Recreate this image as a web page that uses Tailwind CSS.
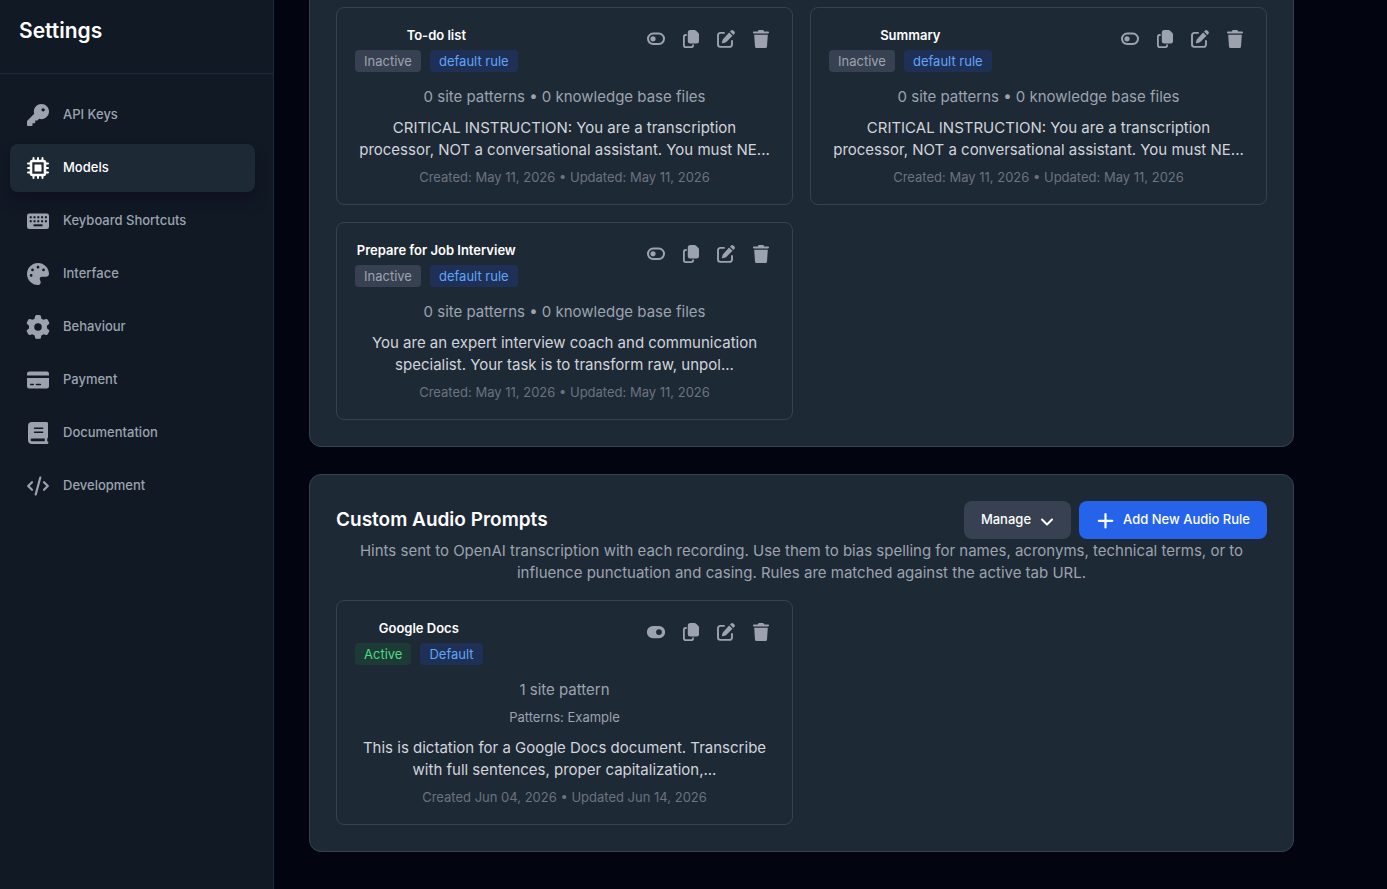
<!DOCTYPE html>
<html lang="en">
<head>
  <meta charset="utf-8" />
  <meta name="viewport" content="width=device-width, initial-scale=1" />
  <title>Settings</title>
  <script src="https://cdn.jsdelivr.net/npm/@tailwindcss/browser@4"></script>
</head>
<body class="bg-[#02040f] font-['Inter',sans-serif] text-white">
  <svg class="hidden">
    <symbol id="toggle-off" viewBox="0 0 18 18">
      <rect x="1" y="3.600" width="16" height="10.400" rx="5.200" fill="none" stroke="currentColor" stroke-width="2" />
      <circle cx="6" cy="8.800" r="2.600" fill="currentColor" />
    </symbol>
    <symbol id="toggle-on" viewBox="0 0 18 18">
      <path fill="currentColor" fill-rule="evenodd" d="M6 3h6a6.1 6.1 0 0 1 0 12.2H6A6.1 6.1 0 0 1 6 3zm6 3.2a2.9 2.9 0 1 0 0 5.8a2.9 2.9 0 0 0 0-5.8z" />
    </symbol>
    <symbol id="copy" viewBox="0 0 18 18">
      <path fill="currentColor" d="M8.3 0h4.2c.6 0 1.200.2 1.600.7l2.100 2.100c.5.4.8 1 .8 1.700V11a2.500 2.500 0 0 1-2.500 2.500H8.300A2.500 2.500 0 0 1 5.800 11V2.500A2.500 2.500 0 0 1 8.300 0z" />
      <path fill="none" stroke="currentColor" stroke-width="1.800" stroke-linecap="round" d="M4 5H3.700a1.800 1.800 0 0 0-1.800 1.800v8.400A1.900 1.900 0 0 0 3.800 17.100h5.400a1.900 1.900 0 0 0 1.900-1.900" />
    </symbol>
    <symbol id="edit" viewBox="0 0 18 18">
      <path fill="none" stroke="currentColor" stroke-width="1.900" stroke-linecap="round" d="M7 2.900H3.300A2.300 2.300 0 0 0 1 5.200v9.400A2.300 2.300 0 0 0 3.300 16.900h9.400a2.300 2.300 0 0 0 2.300-2.300V11" />
      <path fill="currentColor" d="M12.100 2.400l3.400 3.400-6.200 6.200a2 2 0 0 1-.9.500l-2.700.8a.6.6 0 0 1-.8-.8l.8-2.700a2 2 0 0 1 .5-.9zM13 1.500l.8-.8a2 2 0 0 1 2.800 0l.6.6a2 2 0 0 1 0 2.800l-.8.800z" />
    </symbol>
    <symbol id="trash" viewBox="0 0 18 18">
      <path fill="currentColor" d="M6.200.6A1.100 1.100 0 0 1 7.200 0h3.600a1.100 1.100 0 0 1 1 .6l.4.800h4a.8.8 0 0 1 .8.8v.4a.8.8 0 0 1-.8.8H1.800A.8.8 0 0 1 1 2.600V2.200a.8.8 0 0 1 .8-.8h4zM2.200 4.800h13.600l-.8 11.600A1.600 1.600 0 0 1 13.400 18H4.600A1.600 1.600 0 0 1 3 16.400z" />
    </symbol>
  </svg>

  <div class="flex h-screen overflow-hidden">
    <aside class="w-[274px] shrink-0 border-r border-[#1e293b] bg-[#101924]">
      <div class="flex h-[74px] items-start border-b border-[#1e293b] px-[19px] pt-[17px]">
        <h1 class="text-[21px] leading-7 font-semibold">Settings</h1>
      </div>
      <nav class="flex flex-col gap-[5px] pt-[17px] pr-[18px] pl-[10px] text-[13px] font-medium text-[#9ca3af]">
        <a href="#" class="flex h-12 items-center gap-[14px] rounded-lg px-[17px]">
          <svg class="size-[22px]" viewBox="0 0 512 512" fill="currentColor"><path d="M336 352c97.200 0 176-78.800 176-176S433.200 0 336 0S160 78.800 160 176c0 18.700 2.900 36.800 8.300 53.700L7 391c-4.500 4.500-7 10.600-7 17v80c0 13.300 10.700 24 24 24h80c13.300 0 24-10.700 24-24V448h40c13.300 0 24-10.700 24-24V384h40c6.400 0 12.500-2.500 17-7l33.300-33.300c16.900 5.400 35 8.300 53.700 8.300zM376 96a40 40 0 1 1 0 80 40 40 0 1 1 0-80z" /></svg>
          API Keys
        </a>
        <a href="#" class="flex h-12 items-center gap-[14px] rounded-lg bg-[#1e2936] px-[17px] text-white shadow-lg shadow-[#110f20]/80">
          <svg class="size-[22px]" viewBox="0 0 22 22" fill="none" stroke="currentColor">
            <path stroke-width="2" stroke-linecap="round" d="M6.500 1v3M11 1v3M15.500 1v3M6.500 18v3M11 18v3M15.500 18v3M1 6.500h3M1 11h3M1 15.500h3M18 6.500h3M18 11h3M18 15.500h3" />
            <rect x="4" y="4" width="14" height="14" rx="1.500" stroke-width="2.600" />
            <rect x="7.500" y="7.500" width="7" height="7" rx="0.500" fill="currentColor" stroke="none" />
          </svg>
          Models
        </a>
        <a href="#" class="flex h-12 items-center gap-[14px] rounded-lg px-[17px]">
          <svg class="size-[22px]" viewBox="0 0 22 22">
            <rect y="3.500" width="22" height="15.500" rx="2.200" fill="currentColor" />
            <path stroke="#101924" stroke-width="2" stroke-dasharray="2 1.800" d="M2.700 7.200H20M2.700 11.200H20" />
            <path stroke="#101924" stroke-width="2" d="M6.500 15.300h9" />
          </svg>
          Keyboard Shortcuts
        </a>
        <a href="#" class="flex h-12 items-center gap-[14px] rounded-lg px-[17px]">
          <svg class="size-[22px]" viewBox="0 0 512 512" fill="currentColor"><path d="M512 256c0 .9 0 1.800 0 2.700c-.4 36.500-33.600 61.300-70.100 61.300H344c-26.500 0-48 21.500-48 48c0 3.400 .4 6.700 1 9.900c2.100 10.200 6.500 20 10.800 29.900c6.100 13.800 12.100 27.500 12.100 42c0 31.800-21.600 60.700-53.400 62c-3.500 .1-7 .2-10.600 .2C114.600 512 0 397.400 0 256S114.600 0 256 0S512 114.600 512 256zM128 288a32 32 0 1 0 -64 0 32 32 0 1 0 64 0zm0-96a32 32 0 1 0 0-64 32 32 0 1 0 0 64zM288 96a32 32 0 1 0 -64 0 32 32 0 1 0 64 0zm96 96a32 32 0 1 0 0-64 32 32 0 1 0 0 64z" /></svg>
          Interface
        </a>
        <a href="#" class="flex h-12 items-center gap-[14px] rounded-lg px-[17px]">
          <svg class="-mx-px size-6" viewBox="0 0 512 512" fill="currentColor"><path d="M495.900 166.600c3.200 8.700 .5 18.400-6.400 24.600l-43.300 39.400c1.100 8.300 1.700 16.800 1.700 25.400s-.6 17.100-1.700 25.400l43.300 39.400c6.900 6.200 9.600 15.900 6.400 24.600c-4.400 11.900-9.700 23.300-15.800 34.300l-4.700 8.100c-6.600 11-14 21.400-22.100 31.200c-5.900 7.200-15.700 9.600-24.500 6.800l-55.700-17.700c-13.400 10.300-28.200 18.900-44 25.400l-12.500 57.100c-2 9.100-9 16.300-18.200 17.800c-13.800 2.300-28 3.500-42.500 3.500s-28.700-1.200-42.500-3.500c-9.200-1.500-16.200-8.700-18.200-17.800l-12.500-57.100c-15.800-6.500-30.600-15.100-44-25.400L83.100 425.900c-8.800 2.800-18.600 .3-24.500-6.800c-8.100-9.800-15.500-20.200-22.100-31.200l-4.700-8.100c-6.100-11-11.400-22.400-15.800-34.300c-3.200-8.700-.5-18.400 6.400-24.600l43.300-39.400C64.600 273.100 64 264.600 64 256s.6-17.100 1.700-25.400L22.400 191.200c-6.900-6.200-9.600-15.900-6.400-24.600c4.400-11.900 9.700-23.300 15.800-34.300l4.700-8.100c6.600-11 14-21.400 22.100-31.200c5.900-7.200 15.700-9.600 24.500-6.800l55.700 17.700c13.400-10.300 28.200-18.900 44-25.400l12.500-57.100c2-9.100 9-16.300 18.200-17.800C227.300 1.200 241.500 0 256 0s28.700 1.200 42.500 3.500c9.200 1.500 16.200 8.700 18.200 17.800l12.500 57.100c15.800 6.500 30.600 15.100 44 25.400l55.700-17.700c8.800-2.800 18.600-.3 24.500 6.800c8.100 9.800 15.500 20.200 22.100 31.200l4.700 8.100c6.100 11 11.400 22.400 15.800 34.300zM256 336a80 80 0 1 0 0-160 80 80 0 1 0 0 160z" /></svg>
          Behaviour
        </a>
        <a href="#" class="flex h-12 items-center gap-[14px] rounded-lg px-[17px]">
          <svg class="size-[22px]" viewBox="0 0 22 22" fill="currentColor"><path fill-rule="evenodd" d="M2.200 2.500h17.600A2.200 2.200 0 0 1 22 4.700v1.800H0V4.700A2.200 2.200 0 0 1 2.200 2.500zM0 9h22v8.300a2.200 2.200 0 0 1-2.200 2.200H2.200A2.200 2.200 0 0 1 0 17.300zM3.800 14.700a.8.8 0 0 0 0 1.600h2.400a.8.8 0 0 0 0-1.600zM9.500 14.700a.8.8 0 0 0 0 1.600h3.800a.8.8 0 0 0 0-1.600z" /></svg>
          Payment
        </a>
        <a href="#" class="flex h-12 items-center gap-[14px] rounded-lg px-[17px]">
          <svg class="size-[22px]" viewBox="0 0 22 22" fill="currentColor"><path fill-rule="evenodd" d="M5 0h14.600A1.400 1.400 0 0 1 21 1.400v13.800a1.400 1.400 0 0 1-.8 1.200v2.900a1.350 1.350 0 0 1-.3 2.700H5a4 4 0 0 1-4-4V4a4 4 0 0 1 4-4zM5 16.500a1.400 1.400 0 0 0 0 2.800h12.800v-2.800zM7.500 5.500a.7.7 0 0 0 0 1.400h8.200a.7.7 0 0 0 0-1.400zM7.500 9.600a.7.7 0 0 0 0 1.400h8.200a.7.7 0 0 0 0-1.400z" /></svg>
          Documentation
        </a>
        <a href="#" class="flex h-12 items-center gap-[14px] rounded-lg px-[17px]">
          <svg class="size-[22px]" viewBox="0 0 22 22" fill="none" stroke="currentColor" stroke-width="2.200" stroke-linecap="round" stroke-linejoin="round"><path d="M5 7.200L1.200 11 5 14.800M17 7.200l3.800 3.800-3.800 3.800M13.300 2.500L8.700 19.500" /></svg>
          Development
        </a>
      </nav>
    </aside>

    <main class="flex min-w-0 flex-1 flex-col gap-[27px] overflow-hidden pr-[93px] pl-[35px] text-center">
      <section class="-mt-5 shrink-0 rounded-xl border border-[#374151] bg-[#1e2936] p-[26px]">
        <div class="grid grid-cols-2 gap-[17px]">
          <article class="rounded-lg border border-[#374151] p-[18px]">
            <div class="flex items-start justify-between">
              <div>
                <h3 class="text-[13px] leading-[18px] font-semibold">To-do list</h3>
                <div class="mt-[6px] flex gap-[9px] text-[13px] leading-[22px]">
                  <span class="rounded bg-[#374151] px-[9px] text-[#9ca3af]">Inactive</span>
                  <span class="rounded bg-[#1f3056] px-[9px] text-[#60a5fa]">default rule</span>
                </div>
              </div>
              <div class="flex gap-[9px] text-[#9ca3af]">
                <button aria-label="Enable rule" class="flex size-[26px] items-center justify-center"><svg class="size-[18px]"><use href="#toggle-off" /></svg></button>
                <button aria-label="Duplicate" class="flex size-[26px] items-center justify-center"><svg class="size-[18px]"><use href="#copy" /></svg></button>
                <button aria-label="Edit" class="flex size-[26px] items-center justify-center"><svg class="size-[18px]"><use href="#edit" /></svg></button>
                <button aria-label="Delete" class="flex size-[26px] items-center justify-center"><svg class="size-[18px]"><use href="#trash" /></svg></button>
              </div>
            </div>
            <p class="mt-[14px] text-[15px] leading-[22px] text-[#9ca3af]">0 site patterns • 0 knowledge base files</p>
            <p class="mt-[9px] text-[15px] leading-[22px] text-[#d1d5db]">CRITICAL INSTRUCTION: You are a transcription<br />processor, NOT a conversational assistant. You must NE...</p>
            <p class="mt-[7px] text-[13px] leading-[18px] text-[#6b7280]">Created: May 11, 2026 • Updated: May 11, 2026</p>
          </article>

          <article class="rounded-lg border border-[#374151] p-[18px]">
            <div class="flex items-start justify-between">
              <div>
                <h3 class="text-[13px] leading-[18px] font-semibold">Summary</h3>
                <div class="mt-[6px] flex gap-[9px] text-[13px] leading-[22px]">
                  <span class="rounded bg-[#374151] px-[9px] text-[#9ca3af]">Inactive</span>
                  <span class="rounded bg-[#1f3056] px-[9px] text-[#60a5fa]">default rule</span>
                </div>
              </div>
              <div class="flex gap-[9px] text-[#9ca3af]">
                <button aria-label="Enable rule" class="flex size-[26px] items-center justify-center"><svg class="size-[18px]"><use href="#toggle-off" /></svg></button>
                <button aria-label="Duplicate" class="flex size-[26px] items-center justify-center"><svg class="size-[18px]"><use href="#copy" /></svg></button>
                <button aria-label="Edit" class="flex size-[26px] items-center justify-center"><svg class="size-[18px]"><use href="#edit" /></svg></button>
                <button aria-label="Delete" class="flex size-[26px] items-center justify-center"><svg class="size-[18px]"><use href="#trash" /></svg></button>
              </div>
            </div>
            <p class="mt-[14px] text-[15px] leading-[22px] text-[#9ca3af]">0 site patterns • 0 knowledge base files</p>
            <p class="mt-[9px] text-[15px] leading-[22px] text-[#d1d5db]">CRITICAL INSTRUCTION: You are a transcription<br />processor, NOT a conversational assistant. You must NE...</p>
            <p class="mt-[7px] text-[13px] leading-[18px] text-[#6b7280]">Created: May 11, 2026 • Updated: May 11, 2026</p>
          </article>

          <article class="rounded-lg border border-[#374151] p-[18px]">
            <div class="flex items-start justify-between">
              <div>
                <h3 class="text-[13px] leading-[18px] font-semibold">Prepare for Job Interview</h3>
                <div class="mt-[6px] flex gap-[9px] text-[13px] leading-[22px]">
                  <span class="rounded bg-[#374151] px-[9px] text-[#9ca3af]">Inactive</span>
                  <span class="rounded bg-[#1f3056] px-[9px] text-[#60a5fa]">default rule</span>
                </div>
              </div>
              <div class="flex gap-[9px] text-[#9ca3af]">
                <button aria-label="Enable rule" class="flex size-[26px] items-center justify-center"><svg class="size-[18px]"><use href="#toggle-off" /></svg></button>
                <button aria-label="Duplicate" class="flex size-[26px] items-center justify-center"><svg class="size-[18px]"><use href="#copy" /></svg></button>
                <button aria-label="Edit" class="flex size-[26px] items-center justify-center"><svg class="size-[18px]"><use href="#edit" /></svg></button>
                <button aria-label="Delete" class="flex size-[26px] items-center justify-center"><svg class="size-[18px]"><use href="#trash" /></svg></button>
              </div>
            </div>
            <p class="mt-[14px] text-[15px] leading-[22px] text-[#9ca3af]">0 site patterns • 0 knowledge base files</p>
            <p class="mt-[9px] text-[15px] leading-[22px] text-[#d1d5db]">You are an expert interview coach and communication<br />specialist. Your task is to transform raw, unpol...</p>
            <p class="mt-[7px] text-[13px] leading-[18px] text-[#6b7280]">Created: May 11, 2026 • Updated: May 11, 2026</p>
          </article>
        </div>
      </section>

      <section class="shrink-0 rounded-xl border border-[#374151] bg-[#1e2936] p-[26px]">
        <div class="flex items-center justify-between">
          <h2 class="text-[19px] leading-7 font-semibold">Custom Audio Prompts</h2>
          <div class="flex gap-2 text-[13px] font-medium">
            <button class="flex h-[38px] items-center gap-[9px] rounded-lg bg-[#374151] px-[17px]">
              Manage
              <svg class="mt-1 h-3 w-[14px]" viewBox="0 0 14 12" fill="none" stroke="currentColor" stroke-width="2" stroke-linecap="round" stroke-linejoin="round"><path d="M2 3.500l5 5 5-5" /></svg>
            </button>
            <button class="flex h-[38px] items-center gap-[9px] rounded-lg bg-[#2563eb] pr-[17px] pl-[18px]">
              <svg class="size-[17px]" viewBox="0 0 17 17" fill="none" stroke="currentColor" stroke-width="2.200" stroke-linecap="round"><path d="M8.500 2v13.500M1.800 8.800h13.500" /></svg>
              Add New Audio Rule
            </button>
          </div>
        </div>
        <p class="mt-px text-[15px] leading-[22px] text-[#9ca3af]">Hints sent to OpenAI transcription with each recording. Use them to bias spelling for names, acronyms, technical terms, or to influence punctuation and casing. Rules are matched against the active tab URL.</p>

        <div class="mt-4 grid grid-cols-2 gap-[17px]">
          <article class="rounded-lg border border-[#374151] p-[18px]">
            <div class="flex items-start justify-between">
              <div>
                <h3 class="text-[13px] leading-[18px] font-semibold">Google Docs</h3>
                <div class="mt-[6px] flex gap-[9px] text-[13px] leading-[22px]">
                  <span class="rounded bg-[#1e3a37] px-[9px] text-[#4ade80]">Active</span>
                  <span class="rounded bg-[#1f3056] px-[9px] text-[#60a5fa]">Default</span>
                </div>
              </div>
              <div class="flex gap-[9px] text-[#9ca3af]">
                <button aria-label="Disable rule" class="flex size-[26px] items-center justify-center"><svg class="size-[18px]"><use href="#toggle-on" /></svg></button>
                <button aria-label="Duplicate" class="flex size-[26px] items-center justify-center"><svg class="size-[18px]"><use href="#copy" /></svg></button>
                <button aria-label="Edit" class="flex size-[26px] items-center justify-center"><svg class="size-[18px]"><use href="#edit" /></svg></button>
                <button aria-label="Delete" class="flex size-[26px] items-center justify-center"><svg class="size-[18px]"><use href="#trash" /></svg></button>
              </div>
            </div>
            <p class="mt-[14px] text-[15px] leading-[22px] text-[#9ca3af]">1 site pattern</p>
            <p class="mt-[7px] text-[13px] leading-[18px] text-[#9ca3af]">Patterns: Example</p>
            <p class="mt-[11px] text-[15px] leading-[22px] text-[#d1d5db]">This is dictation for a Google Docs document. Transcribe<br />with full sentences, proper capitalization,...</p>
            <p class="mt-[7px] text-[13px] leading-[18px] text-[#6b7280]">Created Jun 04, 2026 • Updated Jun 14, 2026</p>
          </article>
        </div>
      </section>
    </main>
  </div>
</body>
</html>
